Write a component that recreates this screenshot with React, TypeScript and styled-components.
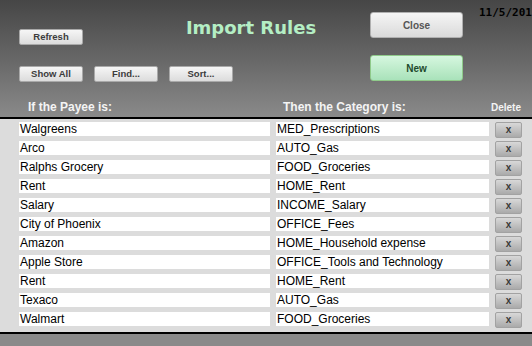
import styled, { createGlobalStyle } from 'styled-components';

const GlobalStyle = createGlobalStyle`
  html, body {
    margin: 0;
    padding: 0;
    width: 532px;
    height: 346px;
    overflow: hidden;
    background: #8a8a8a;
    font-family: "Liberation Sans", Arial, sans-serif;
  }
`;

interface Rule {
  payee: string;
  category: string;
}

const rules: Rule[] = [
  { payee: 'Walgreens', category: 'MED_Prescriptions' },
  { payee: 'Arco', category: 'AUTO_Gas' },
  { payee: 'Ralphs Grocery', category: 'FOOD_Groceries' },
  { payee: 'Rent', category: 'HOME_Rent' },
  { payee: 'Salary', category: 'INCOME_Salary' },
  { payee: 'City of Phoenix', category: 'OFFICE_Fees' },
  { payee: 'Amazon', category: 'HOME_Household expense' },
  { payee: 'Apple Store', category: 'OFFICE_Tools and Technology' },
  { payee: 'Rent', category: 'HOME_Rent' },
  { payee: 'Texaco', category: 'AUTO_Gas' },
  { payee: 'Walmart', category: 'FOOD_Groceries' },
];

const Window = styled.div`
  width: 532px;
  height: 346px;
  display: flex;
  flex-direction: column;
  overflow: hidden;
`;

const Header = styled.header`
  height: 117px;
  border-bottom: 2px solid #000;
  background: linear-gradient(to bottom, #464646 0%, #6a6a6a 55%, #8a8a8a 100%);
  display: flex;
  flex-direction: column;
`;

const TopRow = styled.div`
  height: 55px;
  display: flex;
  align-items: flex-start;
  padding-left: 19px;
  white-space: nowrap;
  overflow: hidden;
`;

const SecondRow = styled.div`
  height: 26px;
  display: flex;
  align-items: flex-start;
  padding-left: 19px;
`;

const ButtonGroup = styled.div`
  display: flex;
  gap: 11px;
  margin-top: 11px;
`;

const SmallButton = styled.button<{ $top?: number }>`
  box-sizing: border-box;
  flex-shrink: 0;
  width: 64px;
  height: 16px;
  margin: ${(p) => p.$top ?? 0}px 0 0 0;
  padding: 0;
  border: 1px solid #a9a9a9;
  border-radius: 2px;
  background: linear-gradient(to bottom, #f6f6f6, #dcdcdc);
  color: #3c3c3c;
  font-family: "Liberation Sans", Arial, sans-serif;
  font-weight: bold;
  font-size: 9.5px;
  line-height: 14px;
`;

const Title = styled.h1`
  box-sizing: border-box;
  flex: 0 0 287px;
  margin: 16px 0 0 0;
  padding-left: 49px;
  text-align: center;
  font-family: "DejaVu Sans", Verdana, sans-serif;
  font-weight: bold;
  font-size: 18px;
  line-height: 24px;
  color: #b4eec4;
`;

const BigButton = styled.button<{ $green?: boolean; $left?: number; $top?: number }>`
  box-sizing: border-box;
  flex-shrink: 0;
  width: 93px;
  height: 26px;
  margin: ${(p) => p.$top ?? 0}px 0 0 ${(p) => p.$left ?? 0}px;
  padding: 0;
  border-radius: 3px;
  border: 1px solid ${(p) => (p.$green ? '#8fca8a' : '#b0b0b0')};
  background: ${(p) =>
    p.$green
      ? 'linear-gradient(to bottom, #d6f7df, #a9e2ba)'
      : 'linear-gradient(to bottom, #f5f5f5, #dadada)'};
  color: ${(p) => (p.$green ? '#1f4a2b' : '#555')};
  font-family: "Liberation Sans", Arial, sans-serif;
  font-weight: bold;
  font-size: 10px;
`;

const DateLabel = styled.div`
  flex-shrink: 0;
  margin: 6px 0 0 16px;
  font-family: "DejaVu Sans Mono", monospace;
  font-weight: bold;
  font-size: 11px;
  line-height: 13px;
  color: #000;
`;

const LabelRow = styled.div`
  margin-top: 19px;
  display: flex;
  align-items: baseline;
  color: #f4f4f4;
  font-weight: bold;
  line-height: 14px;
`;

const ColumnLabel = styled.div<{ $width: number; $size?: number; $indent?: number }>`
  box-sizing: border-box;
  width: ${(p) => p.$width}px;
  padding-left: ${(p) => p.$indent ?? 0}px;
  font-size: ${(p) => p.$size ?? 12}px;
  white-space: nowrap;
`;

const Table = styled.div`
  background: #dcdcdc;
  padding: 3px 0 1px 19px;
  border-bottom: 2px solid #000;
`;

const Row = styled.div`
  height: 19px;
  display: flex;
  align-items: flex-start;
  gap: 6px;
`;

const Field = styled.div<{ $width: number }>`
  box-sizing: border-box;
  width: ${(p) => p.$width}px;
  height: 14px;
  padding-left: 1px;
  background: #fff;
  color: #000;
  font-size: 12px;
  line-height: 14px;
  white-space: nowrap;
  overflow: hidden;
`;

const DeleteButton = styled.button`
  box-sizing: border-box;
  width: 27px;
  height: 16px;
  padding: 0;
  border: 1px solid #a2a2a2;
  border-radius: 2px;
  background: linear-gradient(to bottom, #d8d8d8, #aaaaaa);
  color: #3a3a3a;
  font-family: "Liberation Sans", Arial, sans-serif;
  font-weight: bold;
  font-size: 10px;
  line-height: 14px;
`;

const Footer = styled.footer`
  flex: 1;
  background: #8a8a8a;
`;

export default function App() {
  return (
    <Window>
      <GlobalStyle />
      <Header>
        <TopRow>
          <SmallButton $top={29}>Refresh</SmallButton>
          <Title>Import Rules</Title>
          <BigButton $top={12}>Close</BigButton>
          <DateLabel>11/5/2016</DateLabel>
        </TopRow>
        <SecondRow>
          <ButtonGroup>
            <SmallButton>Show All</SmallButton>
            <SmallButton>Find...</SmallButton>
            <SmallButton>Sort...</SmallButton>
          </ButtonGroup>
          <BigButton $green $left={137}>
            New
          </BigButton>
        </SecondRow>
        <LabelRow>
          <ColumnLabel $width={283} $indent={28}>
            If the Payee is:
          </ColumnLabel>
          <ColumnLabel $width={208}>Then the Category is:</ColumnLabel>
          <ColumnLabel $width={41} $size={10}>
            Delete
          </ColumnLabel>
        </LabelRow>
      </Header>
      <Table>
        {rules.map((rule, i) => (
          <Row key={i}>
            <Field $width={251}>{rule.payee}</Field>
            <Field $width={213}>{rule.category}</Field>
            <DeleteButton>x</DeleteButton>
          </Row>
        ))}
      </Table>
      <Footer />
    </Window>
  );
}
